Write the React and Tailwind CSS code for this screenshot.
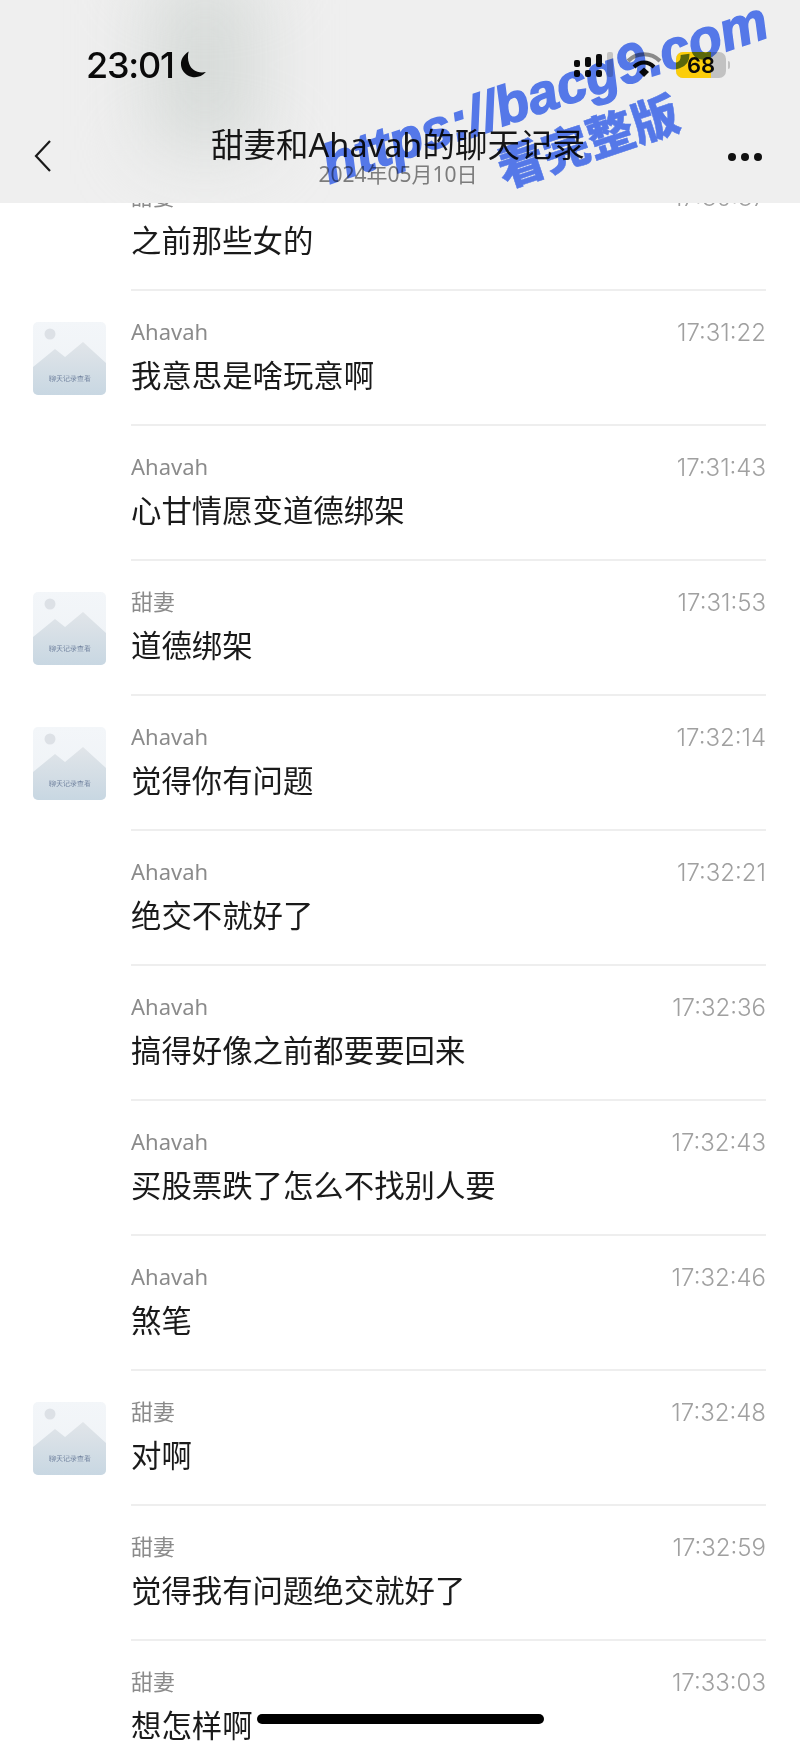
const rows = [
  { name: '甜妻', time: '17:30:37', text: '之前那些女的' },
  { name: 'Ahavah', time: '17:31:22', text: '我意思是啥玩意啊', avatar: true },
  { name: 'Ahavah', time: '17:31:43', text: '心甘情愿变道德绑架' },
  { name: '甜妻', time: '17:31:53', text: '道德绑架', avatar: true },
  { name: 'Ahavah', time: '17:32:14', text: '觉得你有问题', avatar: true },
  { name: 'Ahavah', time: '17:32:21', text: '绝交不就好了' },
  { name: 'Ahavah', time: '17:32:36', text: '搞得好像之前都要要回来' },
  { name: 'Ahavah', time: '17:32:43', text: '买股票跌了怎么不找别人要' },
  { name: 'Ahavah', time: '17:32:46', text: '煞笔' },
  { name: '甜妻', time: '17:32:48', text: '对啊', avatar: true },
  { name: '甜妻', time: '17:32:59', text: '觉得我有问题绝交就好了' },
  { name: '甜妻', time: '17:33:03', text: '想怎样啊' },
]

function Avatar() {
  return (
    <div className="relative w-[73px] h-[73px] rounded-[5px] overflow-hidden bg-gradient-to-b from-[#f3f6f9] to-[#eef2f6]">
      <svg className="absolute inset-0" width="73" height="73" viewBox="0 0 73 73">
        <defs>
          <linearGradient id="hill" x1="0" y1="0" x2="0" y2="1">
            <stop offset="0" stopColor="#e1e5e9" />
            <stop offset="1" stopColor="#c8d7e2" />
          </linearGradient>
        </defs>
        <circle cx="17" cy="12" r="5.5" fill="#dde1e6" />
        <path d="M0 45 L22 27 L32 35 L50 20 L73 41 L73 73 L0 73 Z" fill="url(#hill)" />
      </svg>
      <div className="absolute left-0 right-0 top-[52px] text-center text-[7px] leading-[10px] text-[#6d7f9c] blur-[0.3px]">
        聊天记录查看
      </div>
    </div>
  )
}

function MoonIcon() {
  return (
    <svg width="28" height="28" viewBox="0 0 26 26">
      <path d="M9 0.5 C2 5 0 12 3.5 18 C7.5 25 18.5 27 25 19.5 C17 21 11.5 17.5 9.5 12 C8 8 8 4 9 0.5 Z" fill="#0a0a0a" />
    </svg>
  )
}

function StatusIcons() {
  return (
    <div className="flex items-center mr-[70px]">
      {/* signal */}
      <svg width="42" height="26" viewBox="0 0 42 26" className="mr-[10px]">
        <rect x="0" y="8" width="6" height="7" rx="2" fill="#0a0a0a" />
        <rect x="0" y="18" width="6" height="7" rx="2" fill="#0a0a0a" />
        <rect x="11" y="5" width="6" height="10" rx="2" fill="#0a0a0a" />
        <rect x="11" y="18" width="6" height="7" rx="2" fill="#0a0a0a" />
        <rect x="22" y="2" width="6" height="13" rx="2" fill="#0a0a0a" />
        <rect x="22" y="18" width="6" height="7" rx="2" fill="#0a0a0a" />
        <rect x="33" y="0" width="6" height="25" rx="2" fill="#c4c4c4" />
      </svg>
      {/* wifi */}
      <svg width="36" height="26" viewBox="0 0 36 26" className="mr-[14px]">
        <path d="M2 9 C11 0 25 0 34 9" fill="none" stroke="#8a8a8a" strokeWidth="4" />
        <path d="M8 15 C14 9 22 9 28 15" fill="none" stroke="#0a0a0a" strokeWidth="4" />
        <path d="M13 20 L18 15.5 L23 20 L18 25 Z" fill="#0a0a0a" />
      </svg>
      {/* battery */}
      <div className="relative w-[50px] h-[26px] rounded-[7px] overflow-hidden bg-[#c2c2c2] flex items-center justify-center">
        <div className="absolute left-0 top-0 bottom-0 w-[35px] bg-[#fbcd0b]" />
        <span className="relative text-[22px] leading-none font-semibold text-[#0a0a0a] font-['Inter',sans-serif]">68</span>
      </div>
      <div className="w-[2px] h-[8px] ml-[2px] bg-[#c2c2c2] rounded-r" />
    </div>
  )
}

function Header() {
  return (
    <header className="relative z-10 h-[203px] bg-[#efefef] overflow-hidden shrink-0">
      <div className="absolute left-[150px] -top-[20px] w-[110px] h-[170px] bg-[#d6dad8] blur-[36px]" />

      <div className="relative flex items-center justify-between h-[40px] mt-[45px]">
        <div className="flex items-center ml-[86px]">
          <span className="text-[36px] leading-[40px] font-medium text-[#0a0a0a] font-['Inter',sans-serif] tracking-[-1.2px]">23:01</span>
          <span className="ml-[5px]"><MoonIcon /></span>
        </div>
        <StatusIcons />
      </div>

      <div className="relative flex items-start justify-between mt-[42px] pl-[34px] pr-[38px]">
        <div className="w-[34px]">
          <svg width="18" height="34" viewBox="0 0 18 34" className="mt-[12px]">
            <path d="M16 2 L2 17 L16 32" fill="none" stroke="#1a1a1a" strokeWidth="2.2" />
          </svg>
        </div>
        <div className="flex flex-col items-center">
          <div className="text-[32.5px] leading-[36px] text-[#161616] font-['Noto_Sans','Noto_Sans_CJK_SC',sans-serif] whitespace-nowrap">甜妻和Ahavah的聊天记录</div>
          <div className="text-[21px] leading-[26px] -mt-[2px] text-[#7c7c7c] font-['Noto_Sans','Noto_Sans_CJK_SC',sans-serif] whitespace-nowrap">2024年05月10日</div>
        </div>
        <div className="flex gap-[5px] mt-[26px]">
          <div className="w-[8px] h-[8px] rounded-full bg-[#111]" />
          <div className="w-[8px] h-[8px] rounded-full bg-[#111]" />
          <div className="w-[8px] h-[8px] rounded-full bg-[#111]" />
        </div>
      </div>
    </header>
  )
}

function Row({ row }) {
  return (
    <div className="flex h-[135px]">
      <div className="w-[131px] shrink-0 pl-[33px] pt-[31px]">
        {row.avatar && <Avatar />}
      </div>
      <div className="flex-1 mr-[34px] pt-[27px] border-b-2 border-[#eeeeee]">
        <div className="flex justify-between items-center h-[26px]">
          <span className="text-[22px] text-[#8b8b8b] font-['Noto_Sans','Noto_Sans_CJK_SC',sans-serif]">{row.name}</span>
          <span className="pt-[3px] text-[24px] font-light text-[#a0a0a0] font-['Inter',sans-serif]">{row.time}</span>
        </div>
        <div className="mt-[12px] h-[36px] text-[30.4px] leading-[36px] text-[#1a1a1a] font-['Noto_Sans_CJK_SC',sans-serif]">
          {row.text}
        </div>
      </div>
    </div>
  )
}

export default function App() {
  return (
    <div className="relative w-[800px] h-[1741px] overflow-hidden bg-white flex flex-col">
      <Header />

      <main className="flex-1 overflow-hidden">
        <div className="-mt-[47px]">
          {rows.map(row => <Row key={row.time} row={row} />)}
        </div>
      </main>

      {/* Redaction bar */}
      <div className="absolute z-20 left-[257px] top-[1714px] w-[287px] h-[10px] rounded-full bg-black" />

      {/* Watermark */}
      <div className="absolute z-20 left-[295px] top-[53px] w-[500px] h-[80px] flex items-center justify-center -rotate-[18.5deg] mix-blend-multiply text-[54.5px] leading-none font-bold italic text-[#5a80f8] [-webkit-text-stroke:1.5px_#5a80f8] font-['Liberation_Sans',sans-serif] whitespace-nowrap">
        https://bacg9.com
      </div>
      <div className="absolute z-20 left-[487px] top-[108px] w-[200px] h-[60px] flex items-center justify-center -rotate-[18.5deg] mix-blend-multiply text-[47px] leading-none font-black text-[#5a80f8] [-webkit-text-stroke:0.5px_#5a80f8] font-['Noto_Sans_CJK_SC',sans-serif] whitespace-nowrap">
        看完整版
      </div>
    </div>
  )
}
